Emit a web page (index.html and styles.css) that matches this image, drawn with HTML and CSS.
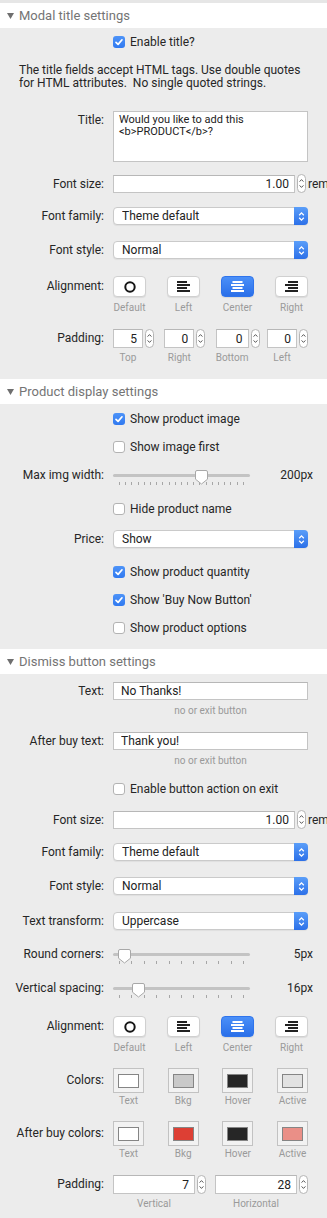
FILE: index.html
```html
<!DOCTYPE html>
<html lang="en">
<head>
    <meta charset="UTF-8">
    <meta name="viewport" content="width=device-width, initial-scale=1.0">
    <title>Upsell modal settings</title>
    <link rel="stylesheet" href="styles.css">
</head>
<body>
    <div class="topbar"></div>

    <!-- modal title -->
    <section class="group">
        <div class="group-head"><svg class="caret" width="7" height="6" viewBox="0 0 7 6"><path d="M0 0h7L3.5 6z" fill="#6f6f6f"/></svg>Modal title settings</div>
        <div class="group-body pb15">
            <div class="row mt6">
                <label class="check"><span class="box on"><svg width="12" height="12" viewBox="0 0 12 12"><path d="M3 6.3 5.1 8.4 9 3.8" fill="none" stroke="#fff" stroke-width="1.7" stroke-linecap="round" stroke-linejoin="round"/></svg></span>Enable title?</label>
            </div>
            <p class="note">The title fields accept HTML tags. Use double quotes<br>for HTML attributes.&nbsp; No single quoted strings.</p>
            <div class="row mt21 top">
                <span class="lbl lbl-area">Title:</span>
                <textarea class="area">Would you like to add this &lt;b&gt;PRODUCT&lt;/b&gt;?</textarea>
            </div>
            <div class="row mt12">
                <span class="lbl">Font size:</span>
                <div class="num-unit">
                    <input class="field num" type="text" value="1.00">
                    <svg class="stepper" width="9" height="19" viewBox="0 0 9 19"><rect x=".5" y=".5" width="8" height="18" rx="4" fill="#fff" stroke="#b5b5b5"/><path d="M2.6 7.6 4.5 5.6 6.4 7.6M2.6 11.4 4.5 13.4 6.4 11.4" fill="none" stroke="#555"/></svg>
                    <span class="unit">rem</span>
                </div>
            </div>
            <div class="row mt14">
                <span class="lbl">Font family:</span>
                <div class="select"><select><option>Theme default</option></select><span class="select-btn"><svg width="7" height="11" viewBox="0 0 7 11"><path d="M1.2 4.2 3.5 1.9 5.8 4.2M1.2 6.8 3.5 9.1 5.8 6.8" fill="none" stroke="#fff" stroke-width="1.3"/></svg></span></div>
            </div>
            <div class="row mt16">
                <span class="lbl">Font style:</span>
                <div class="select"><select><option>Normal</option></select><span class="select-btn"><svg width="7" height="11" viewBox="0 0 7 11"><path d="M1.2 4.2 3.5 1.9 5.8 4.2M1.2 6.8 3.5 9.1 5.8 6.8" fill="none" stroke="#fff" stroke-width="1.3"/></svg></span></div>
            </div>
            <div class="row mt17 top">
                <span class="lbl lbl-btn">Alignment:</span>
                <div class="choices">
                    <div class="choice"><span class="btn"><svg width="12" height="12" viewBox="0 0 12 12"><circle cx="6" cy="6" r="4.7" fill="none" stroke="#151515" stroke-width="2"/></svg></span><span class="sub">Default</span></div>
                    <div class="choice"><span class="btn"><svg width="13" height="11" viewBox="0 0 13 11"><path d="M0 1h10M0 4h13M0 7h10M0 10h13" stroke="#222" stroke-width="2"/></svg></span><span class="sub">Left</span></div>
                    <div class="choice"><span class="btn on"><svg width="13" height="11" viewBox="0 0 13 11"><path d="M1.5 1h10M0 4h13M1.5 7h10M0 10h13" stroke="#fff" stroke-width="2"/></svg></span><span class="sub">Center</span></div>
                    <div class="choice"><span class="btn"><svg width="13" height="11" viewBox="0 0 13 11"><path d="M3 1h10M0 4h13M3 7h10M0 10h13" stroke="#222" stroke-width="2"/></svg></span><span class="sub">Right</span></div>
                </div>
            </div>
            <div class="row mt15 top">
                <span class="lbl lbl-spin">Padding:</span>
                <div class="spins">
                    <div class="spin"><input class="field num" type="text" value="5"><svg class="stepper" width="9" height="19" viewBox="0 0 9 19"><rect x=".5" y=".5" width="8" height="18" rx="4" fill="#fff" stroke="#b5b5b5"/><path d="M2.6 7.6 4.5 5.6 6.4 7.6M2.6 11.4 4.5 13.4 6.4 11.4" fill="none" stroke="#555"/></svg><span class="sub">Top</span></div>
                    <div class="spin"><input class="field num" type="text" value="0"><svg class="stepper" width="9" height="19" viewBox="0 0 9 19"><rect x=".5" y=".5" width="8" height="18" rx="4" fill="#fff" stroke="#b5b5b5"/><path d="M2.6 7.6 4.5 5.6 6.4 7.6M2.6 11.4 4.5 13.4 6.4 11.4" fill="none" stroke="#555"/></svg><span class="sub">Right</span></div>
                    <div class="spin"><input class="field num" type="text" value="0"><svg class="stepper" width="9" height="19" viewBox="0 0 9 19"><rect x=".5" y=".5" width="8" height="18" rx="4" fill="#fff" stroke="#b5b5b5"/><path d="M2.6 7.6 4.5 5.6 6.4 7.6M2.6 11.4 4.5 13.4 6.4 11.4" fill="none" stroke="#555"/></svg><span class="sub">Bottom</span></div>
                    <div class="spin"><input class="field num" type="text" value="0"><svg class="stepper" width="9" height="19" viewBox="0 0 9 19"><rect x=".5" y=".5" width="8" height="18" rx="4" fill="#fff" stroke="#b5b5b5"/><path d="M2.6 7.6 4.5 5.6 6.4 7.6M2.6 11.4 4.5 13.4 6.4 11.4" fill="none" stroke="#555"/></svg><span class="sub">Left</span></div>
                </div>
            </div>
        </div>
    </section>

    <!-- product display -->
    <section class="group">
        <div class="group-head"><svg class="caret" width="7" height="6" viewBox="0 0 7 6"><path d="M0 0h7L3.5 6z" fill="#6f6f6f"/></svg>Product display settings</div>
        <div class="group-body pb13">
            <div class="row mt7">
                <label class="check"><span class="box on"><svg width="12" height="12" viewBox="0 0 12 12"><path d="M3 6.3 5.1 8.4 9 3.8" fill="none" stroke="#fff" stroke-width="1.7" stroke-linecap="round" stroke-linejoin="round"/></svg></span>Show product image</label>
            </div>
            <div class="row mt12">
                <label class="check"><span class="box"></span>Show image first</label>
            </div>
            <div class="row mt12 top">
                <span class="lbl lbl-slider">Max img width:</span>
                <div class="slide-wrap">
                    <div class="slider">
                        <span class="track"></span>
                        <span class="ticks"><i></i><i></i><i></i><i></i><i></i><i></i><i></i><i></i><i></i><i></i><i></i><i></i><i></i><i></i><i></i><i></i><i></i><i></i><i></i><i></i><i></i></span>
                        <svg class="thumb" style="left: 82px" width="13" height="15" viewBox="0 0 13 15"><path d="M2 .5h9a1.5 1.5 0 0 1 1.5 1.5v7.2L6.5 14 .5 9.2V2A1.5 1.5 0 0 1 2 .5z" fill="#fff" stroke="#a8a8a8"/></svg>
                    </div>
                    <span class="val">200px</span>
                </div>
            </div>
            <div class="row mt15">
                <label class="check"><span class="box"></span>Hide product name</label>
            </div>
            <div class="row mt13">
                <span class="lbl">Price:</span>
                <div class="select"><select><option>Show</option></select><span class="select-btn"><svg width="7" height="11" viewBox="0 0 7 11"><path d="M1.2 4.2 3.5 1.9 5.8 4.2M1.2 6.8 3.5 9.1 5.8 6.8" fill="none" stroke="#fff" stroke-width="1.3"/></svg></span></div>
            </div>
            <div class="row mt16">
                <label class="check"><span class="box on"><svg width="12" height="12" viewBox="0 0 12 12"><path d="M3 6.3 5.1 8.4 9 3.8" fill="none" stroke="#fff" stroke-width="1.7" stroke-linecap="round" stroke-linejoin="round"/></svg></span>Show product quantity</label>
            </div>
            <div class="row mt12">
                <label class="check"><span class="box on"><svg width="12" height="12" viewBox="0 0 12 12"><path d="M3 6.3 5.1 8.4 9 3.8" fill="none" stroke="#fff" stroke-width="1.7" stroke-linecap="round" stroke-linejoin="round"/></svg></span>Show 'Buy Now Button'</label>
            </div>
            <div class="row mt12">
                <label class="check"><span class="box"></span>Show product options</label>
            </div>
        </div>
    </section>

    <!-- dismiss button -->
    <section class="group">
        <div class="group-head"><svg class="caret" width="7" height="6" viewBox="0 0 7 6"><path d="M0 0h7L3.5 6z" fill="#6f6f6f"/></svg>Dismiss button settings</div>
        <div class="group-body">
            <div class="row mt8">
                <span class="lbl">Text:</span>
                <input class="field" type="text" value="No Thanks!">
            </div>
            <div class="row mt5"><span class="hint">no or exit button</span></div>
            <div class="row mt15">
                <span class="lbl">After buy text:</span>
                <input class="field" type="text" value="Thank you!">
            </div>
            <div class="row mt5"><span class="hint">no or exit button</span></div>
            <div class="row mt14">
                <label class="check"><span class="box"></span>Enable button action on exit</label>
            </div>
            <div class="row mt13">
                <span class="lbl">Font size:</span>
                <div class="num-unit">
                    <input class="field num" type="text" value="1.00">
                    <svg class="stepper" width="9" height="19" viewBox="0 0 9 19"><rect x=".5" y=".5" width="8" height="18" rx="4" fill="#fff" stroke="#b5b5b5"/><path d="M2.6 7.6 4.5 5.6 6.4 7.6M2.6 11.4 4.5 13.4 6.4 11.4" fill="none" stroke="#555"/></svg>
                    <span class="unit">rem</span>
                </div>
            </div>
            <div class="row mt14">
                <span class="lbl">Font family:</span>
                <div class="select"><select><option>Theme default</option></select><span class="select-btn"><svg width="7" height="11" viewBox="0 0 7 11"><path d="M1.2 4.2 3.5 1.9 5.8 4.2M1.2 6.8 3.5 9.1 5.8 6.8" fill="none" stroke="#fff" stroke-width="1.3"/></svg></span></div>
            </div>
            <div class="row mt16">
                <span class="lbl">Font style:</span>
                <div class="select"><select><option>Normal</option></select><span class="select-btn"><svg width="7" height="11" viewBox="0 0 7 11"><path d="M1.2 4.2 3.5 1.9 5.8 4.2M1.2 6.8 3.5 9.1 5.8 6.8" fill="none" stroke="#fff" stroke-width="1.3"/></svg></span></div>
            </div>
            <div class="row mt17">
                <span class="lbl">Text transform:</span>
                <div class="select"><select><option>Uppercase</option></select><span class="select-btn"><svg width="7" height="11" viewBox="0 0 7 11"><path d="M1.2 4.2 3.5 1.9 5.8 4.2M1.2 6.8 3.5 9.1 5.8 6.8" fill="none" stroke="#fff" stroke-width="1.3"/></svg></span></div>
            </div>
            <div class="row mt16 top">
                <span class="lbl lbl-slider">Round corners:</span>
                <div class="slide-wrap">
                    <div class="slider">
                        <span class="track"></span>
                        <span class="ticks"><i></i><i></i><i></i><i></i><i></i><i></i><i></i><i></i><i></i><i></i><i></i></span>
                        <svg class="thumb" style="left: 5px" width="13" height="15" viewBox="0 0 13 15"><path d="M2 .5h9a1.5 1.5 0 0 1 1.5 1.5v7.2L6.5 14 .5 9.2V2A1.5 1.5 0 0 1 2 .5z" fill="#fff" stroke="#a8a8a8"/></svg>
                    </div>
                    <span class="val">5px</span>
                </div>
            </div>
            <div class="row mt15 top">
                <span class="lbl lbl-slider">Vertical spacing:</span>
                <div class="slide-wrap">
                    <div class="slider">
                        <span class="track"></span>
                        <span class="ticks"><i></i><i></i><i></i><i></i><i></i><i></i><i></i><i></i><i></i><i></i><i></i></span>
                        <svg class="thumb" style="left: 19px" width="13" height="15" viewBox="0 0 13 15"><path d="M2 .5h9a1.5 1.5 0 0 1 1.5 1.5v7.2L6.5 14 .5 9.2V2A1.5 1.5 0 0 1 2 .5z" fill="#fff" stroke="#a8a8a8"/></svg>
                    </div>
                    <span class="val">16px</span>
                </div>
            </div>
            <div class="row mt17 top">
                <span class="lbl lbl-btn">Alignment:</span>
                <div class="choices">
                    <div class="choice"><span class="btn"><svg width="12" height="12" viewBox="0 0 12 12"><circle cx="6" cy="6" r="4.7" fill="none" stroke="#151515" stroke-width="2"/></svg></span><span class="sub">Default</span></div>
                    <div class="choice"><span class="btn"><svg width="13" height="11" viewBox="0 0 13 11"><path d="M0 1h10M0 4h13M0 7h10M0 10h13" stroke="#222" stroke-width="2"/></svg></span><span class="sub">Left</span></div>
                    <div class="choice"><span class="btn on"><svg width="13" height="11" viewBox="0 0 13 11"><path d="M1.5 1h10M0 4h13M1.5 7h10M0 10h13" stroke="#fff" stroke-width="2"/></svg></span><span class="sub">Center</span></div>
                    <div class="choice"><span class="btn"><svg width="13" height="11" viewBox="0 0 13 11"><path d="M3 1h10M0 4h13M3 7h10M0 10h13" stroke="#222" stroke-width="2"/></svg></span><span class="sub">Right</span></div>
                </div>
            </div>
            <div class="row mt14 top">
                <span class="lbl lbl-sw">Colors:</span>
                <div class="choices">
                    <div class="choice sw"><span class="swatch"><i class="chip white"></i></span><span class="sub">Text</span></div>
                    <div class="choice sw"><span class="swatch"><i class="chip grey"></i></span><span class="sub">Bkg</span></div>
                    <div class="choice sw"><span class="swatch"><i class="chip dark"></i></span><span class="sub">Hover</span></div>
                    <div class="choice sw"><span class="swatch"><i class="chip light"></i></span><span class="sub">Active</span></div>
                </div>
            </div>
            <div class="row mt14 top">
                <span class="lbl lbl-sw">After buy colors:</span>
                <div class="choices">
                    <div class="choice sw"><span class="swatch"><i class="chip white"></i></span><span class="sub">Text</span></div>
                    <div class="choice sw"><span class="swatch"><i class="chip red"></i></span><span class="sub">Bkg</span></div>
                    <div class="choice sw"><span class="swatch"><i class="chip dark"></i></span><span class="sub">Hover</span></div>
                    <div class="choice sw"><span class="swatch"><i class="chip pink"></i></span><span class="sub">Active</span></div>
                </div>
            </div>
            <div class="row mt15 top">
                <span class="lbl lbl-spin">Padding:</span>
                <div class="spins">
                    <div class="spin wide"><input class="field num" type="text" value="7"><svg class="stepper" width="9" height="19" viewBox="0 0 9 19"><rect x=".5" y=".5" width="8" height="18" rx="4" fill="#fff" stroke="#b5b5b5"/><path d="M2.6 7.6 4.5 5.6 6.4 7.6M2.6 11.4 4.5 13.4 6.4 11.4" fill="none" stroke="#555"/></svg><span class="sub">Vertical</span></div>
                    <div class="spin wide"><input class="field num" type="text" value="28"><svg class="stepper" width="9" height="19" viewBox="0 0 9 19"><rect x=".5" y=".5" width="8" height="18" rx="4" fill="#fff" stroke="#b5b5b5"/><path d="M2.6 7.6 4.5 5.6 6.4 7.6M2.6 11.4 4.5 13.4 6.4 11.4" fill="none" stroke="#555"/></svg><span class="sub">Horizontal</span></div>
                </div>
            </div>
        </div>
    </section>
</body>
</html>
```

FILE: styles.css
```css
* { box-sizing: border-box; }
body { margin: 0; width: 327px; height: 1218px; overflow: hidden; background: #ececec; font-family: Roboto, "Noto Sans", sans-serif; font-size: 12px; color: #262626; }

.topbar { height: 3px; background: #e6e6e6; }
.group-head { height: 25px; background: #fff; color: #747474; font-size: 13px; display: flex; align-items: center; padding-left: 7px; }
.caret { margin-right: 5px; }
.group-body { padding: 0 19px 8px 0; }
.pb15 { padding-bottom: 15px; }
.pb13 { padding-bottom: 13px; }

/* row spacing */
.mt5 { margin-top: 5px; } .mt6 { margin-top: 6px; } .mt7 { margin-top: 7px; } .mt8 { margin-top: 8px; }
.mt12 { margin-top: 12px; } .mt13 { margin-top: 13px; } .mt14 { margin-top: 14px; } .mt15 { margin-top: 15px; }
.mt16 { margin-top: 16px; } .mt17 { margin-top: 17px; } .mt21 { margin-top: 21px; }

.row { display: grid; grid-template-columns: 104px 1fr; column-gap: 9px; align-items: center; }
.row.top { align-items: start; }
.lbl { grid-column: 1; text-align: right; line-height: 16px; white-space: nowrap; }
.lbl-area { padding-top: 1px; }
.lbl-btn { line-height: 21px; }
.lbl-spin { line-height: 19px; }
.lbl-sw { line-height: 25px; }
.lbl-slider { line-height: 17px; }

.note { margin: 14px 0 0; padding-left: 19px; line-height: 13px; }

.check { grid-column: 2; display: flex; align-items: center; gap: 5px; height: 16px; white-space: nowrap; }
.box { width: 12px; height: 12px; border: 1px solid #b3b3b3; border-radius: 3px; background: #fff; display: flex; }
.box.on { border: none; background: linear-gradient(#4d93f8, #3079f0); }

.field { height: 18px; width: 100%; min-width: 0; border: 1px solid #c4c4c4; border-top-color: #b7b7b7; background: #fff; padding: 0 7px; font: 12px Roboto, "Noto Sans", sans-serif; color: #222; outline: none; }
.num { text-align: right; padding: 0 5px; }
.area { grid-column: 2; height: 51px; resize: none; border: 1px solid #c4c4c4; background: #fff; padding: 2px 5px; font: 11px/12px Roboto, "Noto Sans", sans-serif; color: #222; outline: none; }
.hint { grid-column: 2; text-align: center; font-size: 10px; line-height: 12px; color: #999; }

.num-unit { display: flex; align-items: center; gap: 2px; }
.num-unit .field { flex: 1; }
.stepper { flex: none; display: block; }
.unit { width: 19px; margin-right: -19px; flex: none; }

.select { display: flex; height: 18px; border: 1px solid #cacaca; border-radius: 4px; background: #fff; box-shadow: 0 1px 1px rgba(0,0,0,0.06); }
.select select { flex: 1; appearance: none; border: 0; background: transparent; padding: 0 0 0 8px; font: 12px Roboto, "Noto Sans", sans-serif; color: #222; outline: none; }
.select-btn { width: 14px; margin: -1px -1px -1px 0; border-radius: 0 4px 4px 0; background: linear-gradient(#5a9ef9, #2c70e8); display: flex; align-items: center; justify-content: center; }

.choices { display: flex; justify-content: space-between; }
.choice { width: 33px; display: flex; flex-direction: column; align-items: center; }
.choice.sw { width: 31px; }
.btn { width: 33px; height: 21px; border: 1px solid #d0d0d0; border-radius: 4px; background: #fff; box-shadow: 0 1px 1px rgba(0,0,0,0.08); display: flex; align-items: center; justify-content: center; }
.btn.on { border-color: #2f74ec; background: linear-gradient(#4b90f8, #2a6fe9); }
.sub { margin-top: 5px; font-size: 10px; line-height: 12px; color: #9a9a9a; white-space: nowrap; }
.sw .sub { margin-top: 2px; }
.spin .sub { margin-top: 4px; }

.swatch { width: 31px; height: 25px; border: 1px solid #c2c2c2; background: #f2f2f2; display: flex; align-items: center; justify-content: center; }
.chip { width: 21px; height: 14px; border: 1px solid #858585; }
.chip.white { background: #fff; }
.chip.grey { background: #c9c9c9; }
.chip.dark { background: #262626; }
.chip.light { background: #e2e2e2; }
.chip.red { background: #dd3f34; }
.chip.pink { background: #ea8f87; }

.spins { display: flex; justify-content: space-between; }
.spin { width: 41px; display: grid; grid-template-columns: 1fr 9px; column-gap: 2px; align-items: center; }
.spin.wide { width: 93px; }
.spin .field { height: 19px; }
.spin .sub { grid-column: 1; text-align: center; }

.slide-wrap { display: flex; align-items: flex-start; }
.slider { position: relative; width: 137px; height: 19px; display: flex; flex-direction: column; }
.track { margin-top: 7px; height: 3px; border-radius: 2px; background: #c3c3c3; }
.ticks { margin-top: 5px; padding: 0 6px; display: flex; justify-content: space-between; }
.ticks i { width: 1px; height: 3px; background: #a6a6a6; }
.thumb { position: absolute; top: 3px; }
.val { flex: 1; text-align: right; line-height: 17px; margin-right: -5px; }
```
